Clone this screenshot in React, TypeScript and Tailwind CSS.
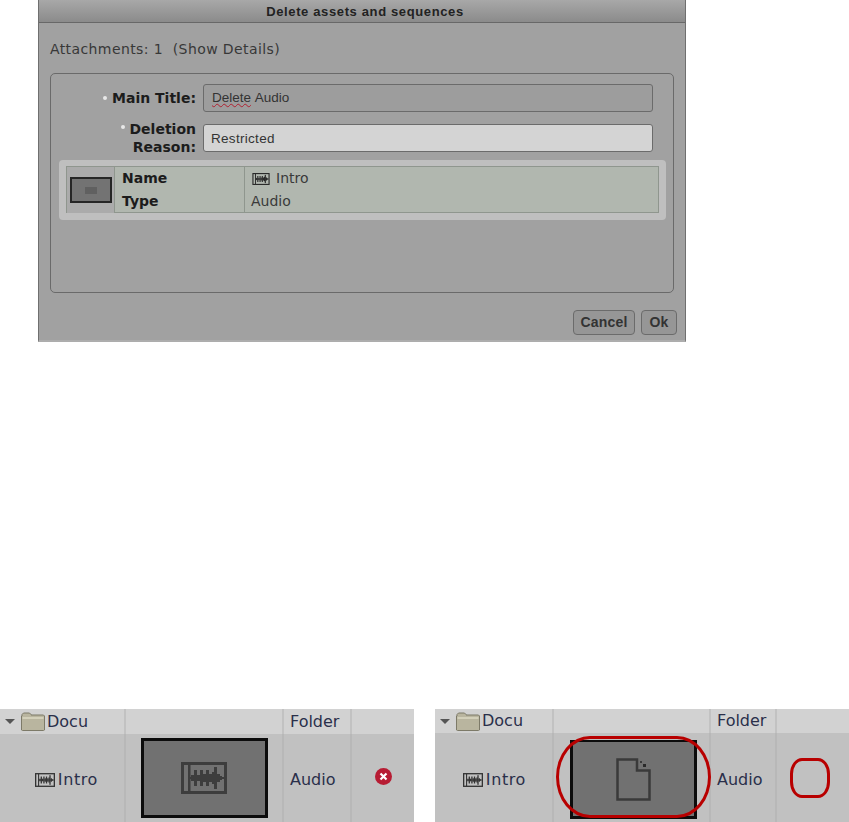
const dejavu = 'font-["DejaVu_Sans",sans-serif]'

// x, half height of each waveform spike
const spikes = [
  [10, 3], [13, 8], [16, 3], [19, 8], [22, 4], [25, 8], [28, 4], [31, 6], [33, 11], [36, 4], [38, 2],
]

function WaveIcon({ className }: { className?: string }) {
  return (
    <svg viewBox="0 0 46 32" className={className} fill="none">
      <rect x="1.5" y="1.5" width="43" height="29" stroke="currentColor" strokeWidth="3" />
      <rect x="7" y="2" width="2.5" height="28" fill="currentColor" />
      <rect x="8" y="15" width="36" height="2" fill="currentColor" />
      {spikes.map(([x, h]) => (
        <rect key={x} x={x} y={16 - h} width="3" height={h * 2} fill="currentColor" />
      ))}
    </svg>
  )
}

function FolderIcon() {
  return (
    <svg viewBox="0 0 24 19" className="h-[19px] w-[24px]">
      <path d="M1 4V2.500L2.500 1h6L10 2.500V3h12.500L23.500 4v14l-1 .5H1.500L.5 18V4z" fill="#b9b59f" stroke="#7d7a68" />
      <path d="M1.500 5h21v2h-21z" fill="#d3d0ba" />
    </svg>
  )
}

function FileIcon() {
  return (
    <svg viewBox="0 0 35 43" className="h-[43px] w-[35px]" fill="none">
      <path d="M1.500 1.500H21V12.500H33.500V41.500H1.500Z" stroke="#3a3a3a" strokeWidth="2.500" />
      <rect x="24" y="3" width="2" height="2" fill="#3a3a3a" />
      <rect x="27" y="6" width="3" height="3" fill="#2a2a2a" />
    </svg>
  )
}

function Dialog() {
  return (
    <div className="ml-[38px] flex h-[342px] w-[648px] flex-col border-x border-b-2 border-x-[#6f6f6f] border-b-[#adadad] bg-[#a1a1a1]">
      <div className="flex h-[23px] items-center justify-center border-b border-[#686868] bg-gradient-to-b from-[#a8a8a8] to-[#8b8b8b] pt-[1px] pl-[6px]">
        <span className='font-["Liberation_Sans",sans-serif] text-[13px] font-bold tracking-[0.63px] text-[#222]'>Delete assets and sequences</span>
      </div>
      <p className={`${dejavu} mt-[17px] ml-[11px] text-[14px] leading-[18px] tracking-[0.4px] text-[#383838]`}>
        Attachments: 1 &nbsp;(Show Details)
      </p>
      <div className="mt-[15px] ml-[11px] h-[220px] w-[624px] rounded-[5px] border border-[#6a6a6a] px-[8px]">
        <div className="mt-[10px] flex h-[28px] items-center">
          <div className={`${dejavu} flex w-[137px] items-center justify-end text-[14px] font-bold text-[#1c1c1c]`}>
            <span className="mr-[5px] size-[4px] rounded-full bg-[#e8e8e8]" />
            Main Title:
          </div>
          <div className='ml-[7px] flex h-[28px] w-[450px] items-center rounded-[3px] border border-[#6b6b6b] bg-[#9d9d9d] pl-[8px] font-["Liberation_Sans",sans-serif] text-[13.5px] text-[#333]'>
            <span className="underline decoration-[#b02030] decoration-wavy decoration-1">Delete</span>&nbsp;Audio
          </div>
        </div>
        <div className="mt-[12px] flex h-[28px] items-center">
          <div className={`${dejavu} w-[137px] text-right text-[14px] leading-[18px] font-bold text-[#1c1c1c]`}>
            <span className="mr-[5px] mb-[5px] inline-block size-[4px] rounded-full bg-[#e8e8e8]" />
            Deletion
            <br />
            Reason:
          </div>
          <div className='ml-[7px] flex h-[28px] w-[450px] items-center rounded-[3px] border border-[#6b6b6b] bg-[#d4d4d4] pt-[2px] pl-[7px] font-["Liberation_Sans",sans-serif] text-[13.5px] tracking-[0.3px] text-[#333]'>
            Restricted
          </div>
        </div>
        <div className="mt-[8px] w-[607px] rounded-[4px] bg-[#bfbfbf] p-[6px_7px_7px]">
          <div className="grid h-[47px] grid-cols-[48px_130px_1fr] border border-[#8f968e] bg-[#b1b7af] text-[14px] leading-[23px] text-[#2a2a2a]">
            <div className="flex items-center justify-center border-r border-[#8f968e] bg-[#ababab]">
              <div className="flex h-[26px] w-[42px] items-center justify-center border-2 border-[#262626] bg-[#737373]">
                <div className="h-[7px] w-[12px] bg-[#606060]" />
              </div>
            </div>
            <div className={`${dejavu} border-r border-[#8f968e] pl-[7px] font-bold text-[#1c1c1c]`}>
              <div>Name</div>
              <div>Type</div>
            </div>
            <div className={`${dejavu} pl-[6px] text-[#3a3a3a]`}>
              <div className="flex items-center gap-[6px] pl-[1px]">
                <WaveIcon className="h-[12px] w-[18px] text-[#2a2a2a]" />
                Intro
              </div>
              <div>Audio</div>
            </div>
          </div>
        </div>
      </div>
      <div className='mt-[17px] mr-[8px] flex justify-end gap-[6px] font-["Liberation_Sans",sans-serif] text-[14px] font-bold tracking-[0.2px] text-[#333]'>
        <button className="h-[25px] w-[62px] rounded-[4px] border border-[#6b6b6b] bg-[#969696]">Cancel</button>
        <button className="h-[25px] w-[36px] rounded-[4px] border border-[#6b6b6b] bg-[#969696]">Ok</button>
      </div>
    </div>
  )
}

function AssetTable({ replaced, cols }: { replaced?: boolean; cols: string }) {
  return (
    <div className={`relative w-[414px] ${dejavu} text-[16px] text-[#2a2f4a]`}>
      <div className={`grid ${replaced ? 'h-[24px]' : 'h-[25px]'} ${cols} bg-[#d2d2d2]`}>
        <div className="flex items-center border-r-2 border-[#c2c2c2] pl-[5px]">
          <span className="mr-[6px] h-0 w-0 border-x-[5px] border-t-[5px] border-x-transparent border-t-[#555]" />
          <FolderIcon />
          <span className="ml-[2px]">Docu</span>
        </div>
        <div className="border-r-2 border-[#c2c2c2]" />
        <div className="flex items-center border-r-2 border-[#c2c2c2] pl-[6px]">Folder</div>
        <div />
      </div>
      <div className={`grid ${replaced ? 'h-[89px]' : 'h-[88px]'} ${cols} bg-[#c1c1c1]`}>
        <div className="flex items-center justify-end border-r-2 border-[#b8b8b8] pt-[4px] pr-[26px]">
          <WaveIcon className="mr-[3px] h-[16px] w-[20px] text-[#333]" />
          <span className="tracking-[0.6px]">Intro</span>
        </div>
        <div className={`flex items-start justify-center border-r-2 border-[#b8b8b8] ${replaced ? 'pt-[7px] pl-[3px]' : 'pt-[4px]'}`}>
          <div className={`flex w-[127px] items-center justify-center border-[3px] border-[#0c0c0c] bg-[#717171] ${replaced ? 'h-[79px] border-t-[2px]' : 'h-[80px]'}`}>
            {replaced ? <FileIcon /> : <WaveIcon className="h-[32px] w-[46px] text-[#3d3d3d]" />}
          </div>
        </div>
        <div className="flex items-center border-r-2 border-[#b8b8b8] pt-[4px] pl-[6px]">Audio</div>
        <div className="flex items-center justify-center">
          {!replaced && (
            <svg viewBox="0 0 17 17" className="mb-[3px] h-[17px] w-[17px]">
              <circle cx="8.500" cy="8.500" r="8.500" fill="#b71c33" />
              <path d="M5.500 5.500l6 6M11.500 5.500l-6 6" stroke="#fff" strokeWidth="2.200" />
            </svg>
          )}
        </div>
      </div>
      {replaced && (
        <>
          <div className="absolute top-[27px] left-[121px] h-[82px] w-[155px] rounded-[34px/41px] border-[3px] border-[#b80000]" />
          <div className="absolute top-[49px] left-[355px] h-[40px] w-[40px] rounded-[12px/16px] border-[3px] border-[#b80000]" />
        </>
      )}
    </div>
  )
}

export default function App() {
  return (
    <div className="h-[822px] w-[849px] overflow-hidden bg-white">
      <Dialog />
      <div className="mt-[367px] flex justify-between">
        <AssetTable cols="grid-cols-[126px_158px_68px_62px]" />
        <AssetTable replaced cols="grid-cols-[119px_157px_66px_72px]" />
      </div>
    </div>
  )
}
